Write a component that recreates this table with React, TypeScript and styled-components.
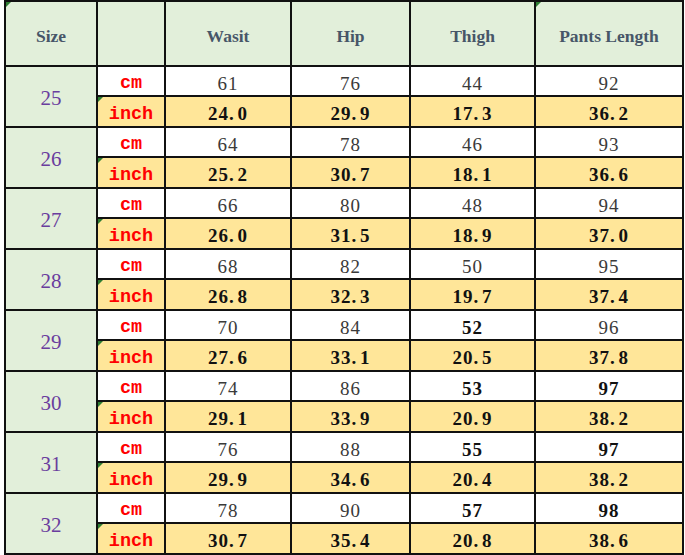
import React from 'react';
import styled, { createGlobalStyle, css } from 'styled-components';

const GlobalStyle = createGlobalStyle`
  html, body {
    margin: 0;
    padding: 0;
    background: #ffffff;
  }
`;

const Page = styled.div`
  padding-left: 4px;
  width: 685px;
  height: 555px;
  box-sizing: border-box;
  overflow: hidden;
`;

const Table = styled.table`
  border-collapse: collapse;
  table-layout: fixed;
  width: 680px;
  border: 2px solid #111;
`;

const Col = styled.col<{ w: number }>`
  width: ${p => p.w}px;
`;

const HeadRow = styled.tr`
  height: 65px;
`;

const BodyRow = styled.tr<{ inch?: boolean }>`
  height: ${p => (p.inch ? 31 : 30)}px;
  background: ${p => (p.inch ? '#ffe699' : '#ffffff')};
`;

const marker = css`
  &::before {
    content: '';
    position: absolute;
    left: 0;
    top: 0;
    border-top: 5px solid #2e7d32;
    border-right: 5px solid transparent;
  }
`;

const HeadCell = styled.th<{ mark?: boolean }>`
  position: relative;
  border: 2px solid #111;
  background: #e2efda;
  color: #475668;
  font-family: 'Liberation Serif', 'Times New Roman', serif;
  font-weight: bold;
  font-size: 17.5px;
  text-align: center;
  vertical-align: middle;
  padding: 6px 0 0;
  ${p => p.mark && marker}
`;

const SizeCell = styled.td`
  border: 2px solid #111;
  background: #e2efda;
  color: #6a3d9e;
  font-family: 'Liberation Serif', 'Times New Roman', serif;
  font-size: 21px;
  text-align: center;
  vertical-align: middle;
  padding: 4px 0 0;
`;

const UnitCell = styled.td<{ mark?: boolean }>`
  position: relative;
  border: 2px solid #111;
  color: #ff0000;
  font-family: 'Liberation Mono', 'Courier New', monospace;
  font-weight: bold;
  font-size: 18.5px;
  text-align: center;
  vertical-align: middle;
  padding: 5px 0 0;
  ${p => p.mark && marker}
`;

const ValueCell = styled.td<{ strong?: boolean }>`
  border: 2px solid #111;
  color: ${p => (p.strong ? '#111' : '#3a3a3a')};
  font-family: 'Liberation Serif', 'Times New Roman', serif;
  font-weight: ${p => (p.strong ? 'bold' : 'normal')};
  font-size: 19px;
  letter-spacing: 1px;
  text-align: center;
  vertical-align: middle;
  padding: 5px 0 0;
`;

const Dot = styled.span`
  display: inline-block;
  width: 0.45em;
  text-align: left;
`;

type Group = {
  size: number;
  cm: (number | [number, boolean])[];
  inch: string[];
};

// cm values flagged true are set in bold in the chart
const groups: Group[] = [
  { size: 25, cm: [61, 76, 44, 92], inch: ['24.0', '29.9', '17.3', '36.2'] },
  { size: 26, cm: [64, 78, 46, 93], inch: ['25.2', '30.7', '18.1', '36.6'] },
  { size: 27, cm: [66, 80, 48, 94], inch: ['26.0', '31.5', '18.9', '37.0'] },
  { size: 28, cm: [68, 82, 50, 95], inch: ['26.8', '32.3', '19.7', '37.4'] },
  { size: 29, cm: [70, 84, [52, true], 96], inch: ['27.6', '33.1', '20.5', '37.8'] },
  { size: 30, cm: [74, 86, [53, true], [97, true]], inch: ['29.1', '33.9', '20.9', '38.2'] },
  { size: 31, cm: [76, 88, [55, true], [97, true]], inch: ['29.9', '34.6', '20.4', '38.2'] },
  { size: 32, cm: [78, 90, [57, true], [98, true]], inch: ['30.7', '35.4', '20.8', '38.6'] },
];

const Decimal: React.FC<{ value: string }> = ({ value }) => {
  const [whole, frac] = value.split('.');
  return (
    <>
      {whole}
      <Dot>.</Dot>
      {frac}
    </>
  );
};

export default function App() {
  return (
    <Page>
      <GlobalStyle />
      <Table>
        <colgroup>
          <Col w={92} />
          <Col w={68} />
          <Col w={126} />
          <Col w={119} />
          <Col w={125} />
          <Col w={148} />
        </colgroup>
        <thead>
          <HeadRow>
            <HeadCell mark>Size</HeadCell>
            <HeadCell />
            <HeadCell>Wasit</HeadCell>
            <HeadCell>Hip</HeadCell>
            <HeadCell>Thigh</HeadCell>
            <HeadCell mark>Pants Length</HeadCell>
          </HeadRow>
        </thead>
        <tbody>
          {groups.map(g => (
            <React.Fragment key={g.size}>
              <BodyRow>
                <SizeCell rowSpan={2}>{g.size}</SizeCell>
                <UnitCell>cm</UnitCell>
                {g.cm.map((v, i) => {
                  const [num, strong] = Array.isArray(v) ? v : [v, false];
                  return (
                    <ValueCell key={i} strong={strong}>
                      {num}
                    </ValueCell>
                  );
                })}
              </BodyRow>
              <BodyRow inch>
                <UnitCell mark>inch</UnitCell>
                {g.inch.map((v, i) => (
                  <ValueCell key={i} strong>
                    <Decimal value={v} />
                  </ValueCell>
                ))}
              </BodyRow>
            </React.Fragment>
          ))}
        </tbody>
      </Table>
    </Page>
  );
}
